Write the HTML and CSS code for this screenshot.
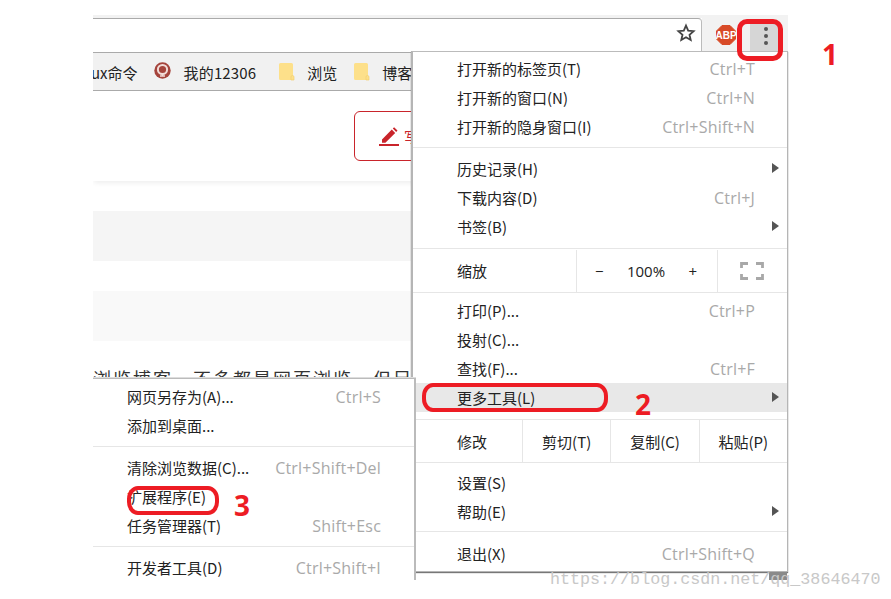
FILE: index.html
```html
<!DOCTYPE html>
<html lang="zh">
<head>
<meta charset="utf-8">
<title>Chrome 更多工具</title>
<link rel="stylesheet" href="styles.css">
</head>
<body>
<div class="stage">
  <div class="window">
    <div class="toolbar">
      <div class="omnibox">
        <svg class="star" width="20" height="20" viewBox="0 0 20 20"><path d="M10 2.600l2.200 5 5.400.5-4.100 3.600 1.200 5.300L10 14.200 5.300 17l1.200-5.300L2.400 8.100l5.400-.5z" fill="none" stroke="#444" stroke-width="1.800" stroke-linejoin="miter"/></svg>
      </div>
      <div class="ext">
        <svg class="abp" width="20" height="20" viewBox="0 0 20 20"><path d="M6 .5h8l5.500 5.500v8L14 19.500H6L.5 14V6z" fill="#d84a27" stroke="#d84a27" stroke-linejoin="round"/><text x="10" y="13.800" class="abp-text" text-anchor="middle">ABP</text></svg>
      </div>
      <div class="kebab"><i></i><i></i><i></i></div>
      <div class="toolbar-end"></div>
    </div>
    <div class="bookmarks">
      <span class="bm bm-clip">ux命令</span>
      <svg class="bm-icon rail" width="17" height="17" viewBox="0 0 17 17"><circle cx="8.500" cy="8.500" r="8.200" fill="#a5443c"/><circle cx="8.500" cy="7.500" r="4.600" fill="none" stroke="#f2dcd8" stroke-width="2"/><path d="M6 14h5M8.500 11v3" stroke="#f2dcd8" stroke-width="1.600"/></svg>
      <span class="bm bm-rail">我的12306</span>
      <svg class="bm-icon folder" width="16" height="19" viewBox="0 0 16 19"><path d="M1.500 1h11a1.500 1.500 0 0 1 1.500 1.500V18H1.500A1.500 1.500 0 0 1 0 16.500v-14A1.500 1.500 0 0 1 1.500 1z" fill="#fde08a"/><path d="M12 18v-3a1.500 1.500 0 0 1 3 0v3z" fill="#fde08a" stroke="#f2cf70" stroke-width=".7"/></svg>
      <span class="bm bm-folder">浏览</span>
      <svg class="bm-icon folder" width="16" height="19" viewBox="0 0 16 19"><path d="M1.500 1h11a1.500 1.500 0 0 1 1.500 1.500V18H1.500A1.500 1.500 0 0 1 0 16.500v-14A1.500 1.500 0 0 1 1.500 1z" fill="#fde08a"/><path d="M12 18v-3a1.500 1.500 0 0 1 3 0v3z" fill="#fde08a" stroke="#f2cf70" stroke-width=".7"/></svg>
      <span class="bm">博客</span>
    </div>
    <div class="page">
      <div class="page-head">
        <div class="write-btn">
          <svg width="20" height="20" viewBox="0 0 20 20"><path d="M3 13.500L12.800 3.500l3.400 3.400L6.400 16.800H3zM13.800 2.500l1.300-1.300 3.400 3.400-1.300 1.300z" fill="#c9242b"/><path d="M0 19h20" stroke="#c9242b" stroke-width="2"/></svg>
          <span class="write-label">写</span>
        </div>
      </div>
      <div class="band"></div>
      <div class="band band-light"></div>
      <p class="page-text">浏览博客，不多都是网页浏览，但另</p>
    </div>

    <div class="menu main-menu">
      <div class="group g1">
        <div class="item"><span>打开新的标签页(T)</span><span class="key">Ctrl+T</span></div>
        <div class="item"><span>打开新的窗口(N)</span><span class="key">Ctrl+N</span></div>
        <div class="item"><span>打开新的隐身窗口(I)</span><span class="key">Ctrl+Shift+N</span></div>
      </div>
      <div class="group g2">
        <div class="item"><span>历史记录(H)</span><b class="arrow"></b></div>
        <div class="item"><span>下载内容(D)</span><span class="key">Ctrl+J</span></div>
        <div class="item"><span>书签(B)</span><b class="arrow"></b></div>
      </div>
      <div class="cells zoom-row">
        <span class="cell-title">缩放</span>
        <div class="zoom-ctl"><span>−</span><span class="pct">100%</span><span>+</span></div>
        <div class="fs">
          <svg width="24" height="18" viewBox="0 0 24 18"><path d="M1.500 6V1.500H8M16 1.500h6.500V6M22.500 12v4.500H16M8 16.500H1.500V12" fill="none" stroke="#a8a8a8" stroke-width="2.800"/></svg>
        </div>
      </div>
      <div class="group g3">
        <div class="item"><span>打印(P)...</span><span class="key">Ctrl+P</span></div>
        <div class="item"><span>投射(C)...</span></div>
        <div class="item"><span>查找(F)...</span><span class="key">Ctrl+F</span></div>
        <div class="item hover"><span>更多工具(L)</span><b class="arrow"></b></div>
      </div>
      <div class="cells edit-row">
        <span class="cell-title">修改</span>
        <span class="edit">剪切(T)</span>
        <span class="edit">复制(C)</span>
        <span class="edit">粘贴(P)</span>
      </div>
      <div class="group g4">
        <div class="item"><span>设置(S)</span></div>
        <div class="item"><span>帮助(E)</span><b class="arrow"></b></div>
      </div>
      <div class="group g5">
        <div class="item"><span>退出(X)</span><span class="key">Ctrl+Shift+Q</span></div>
      </div>
    </div>

    <div class="menu sub-menu">
      <div class="group s1">
        <div class="item"><span>网页另存为(A)...</span><span class="key">Ctrl+S</span></div>
        <div class="item"><span>添加到桌面...</span></div>
      </div>
      <div class="group s2">
        <div class="item"><span>清除浏览数据(C)...</span><span class="key">Ctrl+Shift+Del</span></div>
        <div class="item"><span>扩展程序(E)</span></div>
        <div class="item"><span>任务管理器(T)</span><span class="key">Shift+Esc</span></div>
      </div>
      <div class="group s3">
        <div class="item"><span>开发者工具(D)</span><span class="key">Ctrl+Shift+I</span></div>
      </div>
    </div>
  </div>

  <div class="corner-block"></div>
  <div class="mark mark-kebab"></div>
  <div class="mark mark-tools"></div>
  <div class="mark mark-ext"></div>
  <span class="num num-1">1</span>
  <span class="num num-2">2</span>
  <span class="num num-3">3</span>
  <span class="watermark">https://blog.csdn.net/qq_38646470</span>
</div>
</body>
</html>
```
FILE: styles.css
```css
* { box-sizing: border-box; }
html, body { margin: 0; padding: 0; background: #fff; }
body { font-family: "Noto Sans CJK SC", "Noto Sans", sans-serif; color: #222; }

.stage { position: relative; width: 891px; height: 599px; overflow: hidden; background: #fff; }
.window { position: absolute; left: 93px; top: 15px; width: 695px; height: 565px; }

/* toolbar */
.toolbar { display: flex; height: 37px; background: linear-gradient(#f2f2f2 0 3px, #fff 3px); }
.omnibox { width: 609px; height: 34px; margin-top: 3px; border-top: 1px solid #aaa; border-right: 1px solid #bbb; border-radius: 0 4px 0 0; display: flex; justify-content: flex-end; align-items: center; padding: 0 5px 6px 0; background: #fff; }
.star { display: block; }
.ext { width: 48px; background: #f2f2f2; display: flex; justify-content: center; padding: 10px 0 0 0; border-bottom: 1px solid #aaa; }
.abp { display: block; }
.abp-text { font: 700 10px "Liberation Sans Narrow", "Liberation Sans", sans-serif; fill: #fff; }
.kebab { width: 28px; background: linear-gradient(#f2f2f2 0 6px, #d6d6d6 6px); display: flex; flex-direction: column; align-items: center; gap: 3px; padding: 12px 0 0 4px; border-bottom: 1px solid #aaa; }
.kebab i { width: 4px; height: 4px; border-radius: 50%; background: #555; flex: none; }
.toolbar-end { flex: 1; background: #f2f2f2; border-bottom: 1px solid #aaa; }

/* bookmarks */
.bookmarks { display: flex; align-items: center; height: 39px; padding-top: 1px; background: #f1f1f1; border-top: 1px solid #aaa; border-bottom: 1px solid #aaa; font-size: 15px; color: #222; white-space: nowrap; overflow: hidden; }
.bm { display: block; }
.bm-clip { margin-left: -2px; margin-right: 16px; }
.bm-icon { flex: none; display: block; }
.rail { margin-top: -4px; margin-right: 13px; }
.bm-rail { margin-right: 23px; letter-spacing: .15px; }
.folder { margin-top: -1px; margin-right: 12px; }
.bm-folder { margin-right: 17px; }

/* page */
.page { height: 490px; background: #fff; overflow: hidden; }
.page-head { height: 90px; padding: 20px 0 0 261px; box-shadow: 0 3px 5px -1px #eee; }
.write-btn { width: 120px; height: 50px; border: 1px solid #c9242b; border-radius: 6px; display: flex; align-items: center; gap: 5px; padding-left: 24px; color: #c9242b; font-size: 14px; }
.band { height: 50px; margin-top: 30px; background: #f5f5f5; }
.band-light { background: #f9f9f9; }
.page-text { margin: 24px 0 0; font-size: 18px; line-height: 26px; letter-spacing: 2px; white-space: nowrap; height: 26px; color: #333; }

/* menus */
.menu { position: absolute; background: #fff; font-size: 15px; color: #222; }
.main-menu { left: 318px; top: 36px; width: 377px; height: 521px; border: 1px solid #b5b5b5; border-left-width: 2px; border-top-color: #bbb; box-shadow: 0 1px 1px #777; padding-top: 2px; }
.sub-menu { left: 0; top: 363px; width: 323px; height: 202px; border-top: 1px solid #bbb; border-right: 2px solid #bbb; box-shadow: 0 -1px 0 #ddd; padding-top: 3px; }

.group { border-bottom: 1px solid #e6e6e6; }
.g1 { padding-bottom: 6px; }
.g2 { padding: 6px 0 7px; }
.g3 { padding: 3px 0 7px; }
.g4 { padding: 5px 0; }
.g5 { padding-top: 7px; border-bottom: 0; }
.s1 { padding-bottom: 6px; }
.s2 { padding: 6px 0; }
.s3 { padding-top: 6px; border-bottom: 0; }

.item { position: relative; display: flex; justify-content: space-between; align-items: center; height: 29px; padding: 0 32px 0 44px; white-space: nowrap; }
.key { color: #a9a9a9; font-family: "Open Sans", sans-serif; font-size: 16px; letter-spacing: .2px; }
.arrow { position: absolute; right: 8px; top: 9px; width: 0; height: 0; border-left: 7px solid #555; border-top: 5px solid transparent; border-bottom: 5px solid transparent; }
.hover { background: #e8e8e8; }
.sub-menu .item { padding: 0 33px 0 34px; }

.cells { display: flex; align-items: center; border-bottom: 1px solid #e6e6e6; }
.cell-title { width: 109px; padding-left: 44px; flex: none; }
.zoom-row { height: 44px; }
.zoom-row .cell-title { width: 163px; }
.zoom-ctl { width: 142px; height: 42px; border-left: 1px solid #e6e6e6; border-right: 1px solid #e6e6e6; display: flex; justify-content: space-between; align-items: center; padding: 0 20px 0 18px; font-family: "Open Sans", sans-serif; }
.fs { flex: 1; display: flex; justify-content: center; padding-right: 2px; }
.fs svg { display: block; }
.edit-row { height: 43px; }
.edit { width: 89px; height: 42px; border-left: 1px solid #e6e6e6; display: flex; align-items: center; justify-content: center; }

/* annotations */
.corner-block { position: absolute; left: 769px; top: 572px; width: 18px; height: 8px; background: #8a8a8a; }
.mark { position: absolute; border: 4px solid #ed1c24; }
.mark-kebab { left: 737px; top: 19px; width: 46px; height: 42px; border-width: 5px; border-radius: 10px; }
.mark-tools { left: 422px; top: 383px; width: 186px; height: 29px; border-radius: 11px / 13px; }
.mark-ext { left: 127px; top: 486px; width: 92px; height: 29px; border-radius: 11px / 13px; }
.num { position: absolute; font: 700 28px/32px "Noto Sans", sans-serif; color: #ed1c24; }
.num-1 { left: 822px; top: 38px; }
.num-2 { left: 635px; top: 388px; }
.num-3 { left: 234px; top: 489px; }
.watermark { position: absolute; left: 550px; top: 570px; font: 16.700px/20px "Liberation Mono", monospace; color: #c8c8c8; white-space: nowrap; }
```
